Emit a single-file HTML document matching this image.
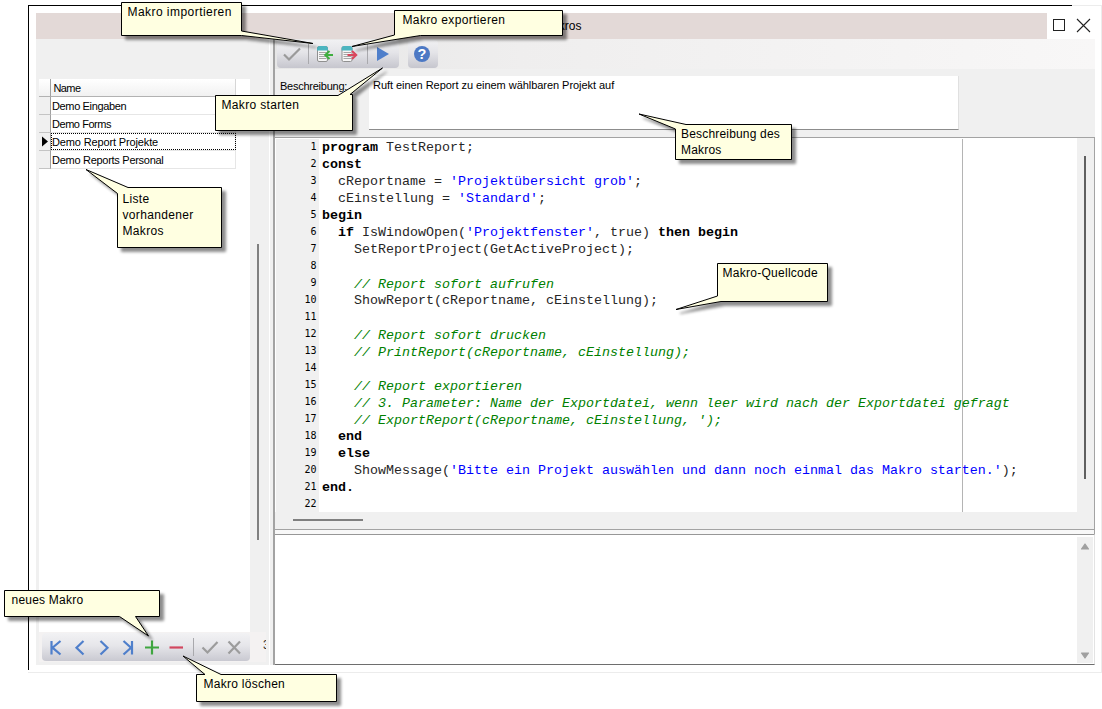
<!DOCTYPE html>
<html lang="de">
<head>
<meta charset="utf-8">
<title>Makros</title>
<style>
html,body{margin:0;padding:0;background:#fff;}
body{width:1102px;height:709px;position:relative;overflow:hidden;font-family:"Liberation Sans",sans-serif;font-size:11px;color:#000;}
.abs{position:absolute;}
/* window frame */
#f-top{left:28px;top:5px;width:1044px;height:1px;background:#000;}
#f-left{left:28px;top:5px;width:1px;height:665px;background:#000;}
#f-top2{left:1072px;top:5px;width:30px;height:1px;background:#ececec;}
#f-right{left:1101px;top:5px;width:1px;height:668px;background:#ececec;}
#f-bot{left:28px;top:672px;width:1074px;height:1px;background:#ececec;}
#title{left:36px;top:13px;width:1011px;height:26px;background:#e3d9d7;}
#title span{position:absolute;right:465.600px;top:6px;font-size:12px;line-height:14px;}
#btn-max{left:1053px;top:19px;width:10px;height:10px;border:1px solid #222;}
#client{left:36px;top:39px;width:1059px;height:626px;background:#f0f0f0;}
#band{left:275px;top:39px;width:820px;height:30px;background:linear-gradient(90deg,#e6e6e6 0%,#efeeee 30%,#f8f7f7 100%);}
/* left grid */
#grid{left:39px;top:79px;width:211px;height:553px;background:#fff;}
.hdr{left:39px;top:79px;height:17px;background:linear-gradient(#ffffff,#f1f1f1);border-bottom:1px solid #b2b2b2;border-right:1px solid #a0a0a0;}
.ind{left:39px;width:11px;height:17px;background:#f0f0f0;border-bottom:1px solid #c4c4c4;border-right:1px solid #a0a0a0;}
.cell{left:51px;width:184px;height:17px;border-bottom:1px solid #e6e6e6;border-right:1px solid #e6e6e6;line-height:17px;white-space:nowrap;}
.cell span,.hdr span{position:absolute;left:1px;top:0;line-height:18px;letter-spacing:-0.25px;}
#focus{left:51px;top:133px;width:183px;height:15px;border:1px dotted #000;}
#lthumb{left:257px;top:244px;width:2px;height:296px;background:#808080;}
#split1{left:269px;top:39px;width:1px;height:626px;background:#fff;}
#split2{left:273px;top:39px;width:2px;height:626px;background:#a3a3a3;}
/* nav bar */
#nav{left:42px;top:633px;width:208px;height:28px;border-radius:4px;background:linear-gradient(#f2f2f4 0%,#e6e6ea 45%,#c9c9d1 100%);}
/* toolbar */
.tb{top:40px;height:28px;border-radius:4px;background:linear-gradient(#f1f1f3 0%,#e4e4e8 45%,#c6c6ce 100%);}
#tb1{left:277px;width:122px;}
#tb2{left:408px;width:30px;}
.sep{width:1px;background:#a9a9ad;}
#lbl{left:280px;top:78px;line-height:16px;letter-spacing:-0.25px;}
#desc{left:369px;top:76px;width:590px;height:54px;background:#fff;border-bottom:1px solid #8c8c8c;border-right:1px solid #e0e0e0;box-sizing:border-box;}
#desc span{position:absolute;left:4px;top:1px;line-height:16px;letter-spacing:-0.045px;white-space:nowrap;}
/* editor */
#ed{left:275px;top:137px;width:819px;height:391px;background:#fff;border-top:1px solid #a3a3a3;border-right:1px solid #a3a3a3;border-bottom:1px solid #a3a3a3;}
#gutter{left:1px;top:1px;width:43px;height:373px;background:#f0f0f0;}
#margin{left:687px;top:1px;width:1px;height:373px;background:#b4b4b4;}
#vsb{left:802px;top:0;width:17px;height:391px;background:#f0f0f0;}
#vthumb{left:809px;top:18px;width:2px;height:323px;background:#606060;}
#hsb{left:0;top:374px;width:802px;height:17px;background:#f0f0f0;}
#hthumb{left:18px;top:7px;width:70px;height:2px;background:#808080;}
#code{left:0;top:1px;font-family:"Liberation Mono",monospace;font-size:13.33px;line-height:17px;white-space:pre;color:#262626;}
#code div{height:17px;position:relative;}
#code i{color:#008000;position:relative;top:1px;}
#code b{color:#000;}
#code s{text-decoration:none;color:#0000ff;}
#code u{text-decoration:none;position:absolute;left:0;width:41.5px;text-align:right;font-family:"DejaVu Sans Mono",monospace;font-size:10px;color:#000;top:-1px;}
#code span{position:absolute;left:47px;top:0;}
/* bottom panel */
#bp{left:275px;top:534px;width:820px;height:131px;background:#fff;border-top:1px solid #979797;border-right:1px solid #e3e3e3;border-bottom:1px solid #6e6e6e;box-sizing:border-box;}
#bsb{left:802px;top:2px;width:16px;height:126px;background:#f0f0f0;}
#gap{left:275px;top:530px;width:819px;height:4px;background:#f8f8f8;border-right:1px solid #a3a3a3;}
/* callouts */
.ct{font-size:12px;line-height:16px;white-space:nowrap;letter-spacing:0px;color:#000;}
</style>
</head>
<body>
<div class="abs" id="f-top"></div><div class="abs" id="f-left"></div><div class="abs" id="f-top2"></div><div class="abs" id="f-right"></div><div class="abs" id="f-bot"></div>
<div class="abs" id="title"><span>Makros</span></div>
<div class="abs" id="btn-max"></div>
<svg class="abs" style="left:1076px;top:18px" width="16" height="16" viewBox="0 0 16 16"><path d="M1 1 L14 14 M14 1 L1 14" stroke="#222" stroke-width="1.1" fill="none"/></svg>
<div class="abs" id="client"></div>
<div class="abs" id="band"></div>

<!-- LEFT GRID -->
<div class="abs" id="grid"></div>
<div class="abs hdr" style="width:11px"></div>
<div class="abs hdr" style="left:51px;width:184px;border-right-color:#d6d6d6"><span style="left:2.500px;letter-spacing:-0.6px">Name</span></div>
<div class="abs ind" style="top:97px"></div><div class="abs cell" style="top:97px"><span style="letter-spacing:-0.36px">Demo Eingaben</span></div>
<div class="abs ind" style="top:115px"></div><div class="abs cell" style="top:115px"><span style="letter-spacing:-0.45px">Demo Forms</span></div>
<div class="abs ind" style="top:133px"></div><div class="abs cell" style="top:133px"><span style="letter-spacing:-0.14px">Demo Report Projekte</span></div>
<div class="abs ind" style="top:151px"></div><div class="abs cell" style="top:151px"><span style="letter-spacing:-0.28px">Demo Reports Personal</span></div>
<div class="abs" id="focus"></div>
<svg class="abs" style="left:41px;top:136px" width="8" height="12" viewBox="0 0 8 12"><path d="M1 0.5 L7 5.5 L1 10.5 Z" fill="#000"/></svg>
<div class="abs" id="lthumb"></div>
<div class="abs" id="split1"></div><div class="abs" id="split2"></div>

<!-- NAV BAR -->
<div class="abs" style="left:39px;top:632px;width:227px;height:30px;background:#f4f2f2"></div>
<div class="abs" id="nav"></div>
<svg class="abs" style="left:41px;top:633px" width="209" height="28" viewBox="0 0 209 28">
 <g fill="none" stroke="#4f7fcb" stroke-width="2.2">
  <path d="M10.5 8 V21.5 M19.5 8 L11.5 14.7 L19.5 21.5"/>
  <path d="M42.5 8 L35.5 14.7 L42.5 21.5"/>
  <path d="M59.5 8 L66.5 14.7 L59.5 21.5"/>
  <path d="M91 8 V21.5 M82.5 8 L90 14.7 L82.5 21.5"/>
 </g>
 <path d="M111 7.5 V21.5 M104 14.5 H118" stroke="#3fa640" stroke-width="2.2" fill="none"/>
 <path d="M128.5 14.5 H142" stroke="#d2475f" stroke-width="2.2" fill="none"/>
 <path d="M152.5 5 V23" stroke="#a9a9ad" stroke-width="1"/>
 <path d="M161.5 14.5 L166.5 19.5 L176.5 9" stroke="#9c9c9c" stroke-width="2.2" fill="none"/>
 <path d="M187.5 8.5 L199 20.5 M199 8.5 L187.5 20.5" stroke="#9c9c9c" stroke-width="2.2" fill="none"/>
</svg>
<div class="abs" style="left:263px;top:638px;width:3px;overflow:hidden;font-size:12px;color:#333;line-height:14px">3</div>

<!-- TOOLBAR -->
<div class="abs tb" id="tb1"></div><div class="abs tb" id="tb2"></div>
<svg class="abs" style="left:277px;top:40px" width="162" height="28" viewBox="0 0 162 28">
 <path d="M7 14.5 L12 19.5 L23 8.5" stroke="#9a9a9a" stroke-width="2.2" fill="none"/>
 <path d="M31.5 4 V24" stroke="#a9a9ad"/>
 <g id="doc">
  <rect x="40.5" y="6.5" width="10" height="15" rx="1.5" fill="#f6f6f6" stroke="#909090" stroke-width="1"/>
  <path d="M40 9 a3 3 0 0 1 3 -3 h5 a3 3 0 0 1 3 3 v1.500 h-11 z" fill="#4cb5c0"/>
  <path d="M42 12.500 h7.500 M42 14.500 h7.500 M42 16.500 h7.500 M42 18.500 h7.500" stroke="#a6a6a6" stroke-width="1"/>
 </g>
 <path d="M56 15 H49 M52.500 11 L48.300 15 L52.500 19" stroke="#3fae3f" stroke-width="2.100" fill="none"/>
 <use href="#doc" x="24.500"/>
 <path d="M70.500 15 H78.500 M75 11 L79.200 15 L75 19" stroke="#d9475c" stroke-width="2.100" fill="none"/>
 <path d="M90.5 4 V24" stroke="#a9a9ad"/>
 <path d="M100 7 L112 14 L100 21 Z" fill="#4f7fcb"/>
 <circle cx="145" cy="14" r="8" fill="#4c78c4"/>
 <text x="145" y="19.2" text-anchor="middle" font-family="Liberation Sans, sans-serif" font-weight="bold" font-size="14.5" fill="#fff">?</text>
</svg>
<div class="abs" id="lbl">Beschreibung:</div>
<div class="abs" id="desc"><span>Ruft einen Report zu einem wählbaren Projekt auf</span></div>

<!-- EDITOR -->
<div class="abs" id="ed">
 <div class="abs" id="gutter"></div>
 <div class="abs" id="margin"></div>
 <div class="abs" id="code"><div><u>1</u><span><b>program</b> TestReport;</span></div><div><u>2</u><span><b>const</b></span></div><div><u>3</u><span>  cReportname = <s>'Projektübersicht grob'</s>;</span></div><div><u>4</u><span>  cEinstellung = <s>'Standard'</s>;</span></div><div><u>5</u><span><b>begin</b></span></div><div><u>6</u><span>  <b>if</b> IsWindowOpen(<s>'Projektfenster'</s>, true) <b>then</b> <b>begin</b></span></div><div><u>7</u><span>    SetReportProject(GetActiveProject);</span></div><div><u>8</u><span></span></div><div><u>9</u><span>    <i>// Report sofort aufrufen</i></span></div><div><u>10</u><span>    ShowReport(cReportname, cEinstellung);</span></div><div><u>11</u><span></span></div><div><u>12</u><span>    <i>// Report sofort drucken</i></span></div><div><u>13</u><span>    <i>// PrintReport(cReportname, cEinstellung);</i></span></div><div><u>14</u><span></span></div><div><u>15</u><span>    <i>// Report exportieren</i></span></div><div><u>16</u><span>    <i>// 3. Parameter: Name der Exportdatei, wenn leer wird nach der Exportdatei gefragt</i></span></div><div><u>17</u><span>    <i>// ExportReport(cReportname, cEinstellung, ');</i></span></div><div><u>18</u><span>  <b>end</b></span></div><div><u>19</u><span>  <b>else</b></span></div><div><u>20</u><span>    ShowMessage(<s>'Bitte ein Projekt auswählen und dann noch einmal das Makro starten.'</s>);</span></div><div><u>21</u><span><b>end.</b></span></div><div><u>22</u><span></span></div></div>
 <div class="abs" id="vsb"></div><div class="abs" id="vthumb"></div>
 <div class="abs" id="hsb"><div class="abs" id="hthumb"></div></div>
</div>
<div class="abs" id="gap"></div>
<div class="abs" id="bp">
 <div class="abs" id="bsb">
  <svg class="abs" style="left:0;top:0" width="16" height="126" viewBox="0 0 16 126"><path d="M4.5 12 L8 7 L11.500 12 Z" fill="#a0a0a0" stroke="#a0a0a0" stroke-linejoin="round" stroke-width="1.2"/><path d="M4.5 116 L8 121 L11.5 116 Z" fill="#a0a0a0" stroke="#a0a0a0" stroke-linejoin="round" stroke-width="1.2"/></svg>
 </div>
</div>

<!-- CALLOUTS -->
<svg class="abs" style="left:0;top:0" width="1102" height="709" viewBox="0 0 1102 709">
 <defs>
  <filter id="sh" x="-10%" y="-10%" width="130%" height="140%"><feGaussianBlur in="SourceAlpha" stdDeviation="1.6"/><feOffset dx="3.5" dy="3.5"/><feComponentTransfer><feFuncA type="linear" slope="0.45"/></feComponentTransfer><feMerge><feMergeNode/><feMergeNode in="SourceGraphic"/></feMerge></filter>
 </defs>
 <g fill="#ffffe1" stroke="#000" stroke-width="1" filter="url(#sh)" stroke-linejoin="miter">
  <path d="M121.500 2.500 H241.500 V31 L313 43.500 L241.500 35.500 H121.500 Z"/>
  <path d="M394.500 10.500 H562.500 V35.500 H420.500 L352 46.500 L394.500 35 Z"/>
  <path d="M215.500 95.500 H338 L382.500 68 L350 94.500 H352.500 V130.500 H215.500 Z"/>
  <path d="M686 124.500 H791.500 V159.500 H675.500 V129 L639 114 Z"/>
  <path d="M128 187.500 H221.500 V247.500 H117.500 V193.500 L86 169.500 Z"/>
  <path d="M717.500 263.500 H827.500 V301.500 H721 L676 309.500 L717.500 296 Z"/>
  <path d="M4.500 590.500 H159.500 V616.500 H135.500 L148.500 636 L119.500 616.500 H4.500 Z"/>
  <path d="M196.500 674.500 H205 L183 656 L221 674.500 H336.500 V701.500 H196.500 Z"/>
 </g>
</svg>
<div class="abs ct" style="left:127.5px;top:4px;letter-spacing:0.45px">Makro importieren</div>
<div class="abs ct" style="left:402.500px;top:12px;letter-spacing:0.36px">Makro exportieren</div>
<div class="abs ct" style="left:221.500px;top:97px;letter-spacing:0.33px">Makro starten</div>
<div class="abs ct" style="left:681px;top:126px;letter-spacing:0.18px">Beschreibung des<br>Makros</div>
<div class="abs ct" style="left:122.500px;top:191px;letter-spacing:0.33px">Liste<br>vorhandener<br>Makros</div>
<div class="abs ct" style="left:722.500px;top:265px;letter-spacing:0.27px">Makro-Quellcode</div>
<div class="abs ct" style="left:11.500px;top:592px;letter-spacing:0.22px">neues Makro</div>
<div class="abs ct" style="left:203.500px;top:676px;letter-spacing:0.27px">Makro löschen</div>
</body>
</html>
